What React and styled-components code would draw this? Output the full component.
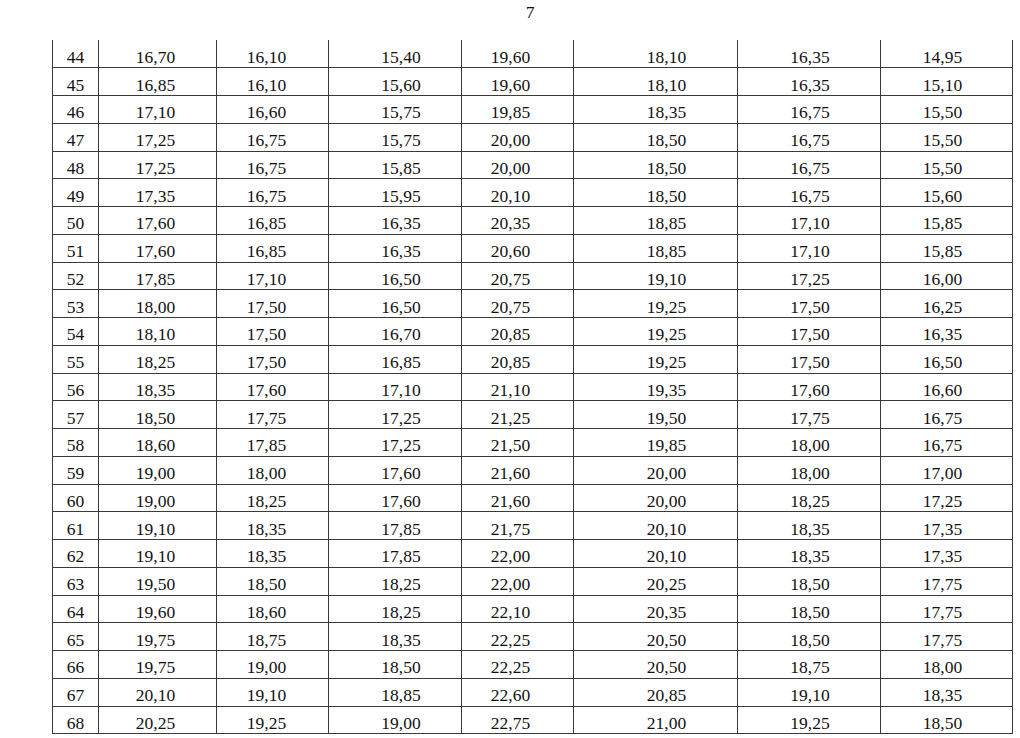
import React from "react";
import styled, { createGlobalStyle } from "styled-components";

const rows = [
	["44", "16,70", "16,10", "15,40", "19,60", "18,10", "16,35", "14,95"],
	["45", "16,85", "16,10", "15,60", "19,60", "18,10", "16,35", "15,10"],
	["46", "17,10", "16,60", "15,75", "19,85", "18,35", "16,75", "15,50"],
	["47", "17,25", "16,75", "15,75", "20,00", "18,50", "16,75", "15,50"],
	["48", "17,25", "16,75", "15,85", "20,00", "18,50", "16,75", "15,50"],
	["49", "17,35", "16,75", "15,95", "20,10", "18,50", "16,75", "15,60"],
	["50", "17,60", "16,85", "16,35", "20,35", "18,85", "17,10", "15,85"],
	["51", "17,60", "16,85", "16,35", "20,60", "18,85", "17,10", "15,85"],
	["52", "17,85", "17,10", "16,50", "20,75", "19,10", "17,25", "16,00"],
	["53", "18,00", "17,50", "16,50", "20,75", "19,25", "17,50", "16,25"],
	["54", "18,10", "17,50", "16,70", "20,85", "19,25", "17,50", "16,35"],
	["55", "18,25", "17,50", "16,85", "20,85", "19,25", "17,50", "16,50"],
	["56", "18,35", "17,60", "17,10", "21,10", "19,35", "17,60", "16,60"],
	["57", "18,50", "17,75", "17,25", "21,25", "19,50", "17,75", "16,75"],
	["58", "18,60", "17,85", "17,25", "21,50", "19,85", "18,00", "16,75"],
	["59", "19,00", "18,00", "17,60", "21,60", "20,00", "18,00", "17,00"],
	["60", "19,00", "18,25", "17,60", "21,60", "20,00", "18,25", "17,25"],
	["61", "19,10", "18,35", "17,85", "21,75", "20,10", "18,35", "17,35"],
	["62", "19,10", "18,35", "17,85", "22,00", "20,10", "18,35", "17,35"],
	["63", "19,50", "18,50", "18,25", "22,00", "20,25", "18,50", "17,75"],
	["64", "19,60", "18,60", "18,25", "22,10", "20,35", "18,50", "17,75"],
	["65", "19,75", "18,75", "18,35", "22,25", "20,50", "18,50", "17,75"],
	["66", "19,75", "19,00", "18,50", "22,25", "20,50", "18,75", "18,00"],
	["67", "20,10", "19,10", "18,85", "22,60", "20,85", "19,10", "18,35"],
	["68", "20,25", "19,25", "19,00", "22,75", "21,00", "19,25", "18,50"],
];

// column widths and how far the text sits off the column centre
const widths = [46, 118, 112, 133, 112, 164, 143, 132];
const shifts = [0, -2, -6, 6, -7, 11, 1, -4];

const App = () => {
	return (
		<>
			<GlobalStyle />
			<Page>
				<PageNumber>7</PageNumber>
				<Table>
					<colgroup>
						{widths.map((w, i) => (
							<col key={i} style={{ width: w }} />
						))}
					</colgroup>
					<tbody>
						{rows.map((row) => (
							<Row key={row[0]}>
								{row.map((cell, i) => (
									<Cell key={i} $shift={shifts[i]}>
										{cell}
									</Cell>
								))}
							</Row>
						))}
					</tbody>
				</Table>
			</Page>
		</>
	);
};

const GlobalStyle = createGlobalStyle`
	body {
		margin: 0;
		background: #fff;
		font-family: "Liberation Serif", "Times New Roman", serif;
		color: #111;
	}
`;

const Page = styled.div`
	width: 960px;
	padding-left: 52px;
`;

const PageNumber = styled.div`
	height: 40px;
	padding-right: 4px;
	box-sizing: border-box;
	text-align: center;
	font-size: 17.5px;
	line-height: 24px;
`;

const Table = styled.table`
	width: 961px;
	table-layout: fixed;
	border-collapse: collapse;
	font-size: 17.5px;
`;

const Row = styled.tr`
	height: 27.76px;
`;

const Cell = styled.td`
	padding: 6px ${(p) => Math.max(0, -2 * p.$shift)}px 0
		${(p) => Math.max(0, 2 * p.$shift)}px;
	text-align: center;
	line-height: 20px;
	border-left: 1px solid #3a3a3a;
	border-right: 1px solid #3a3a3a;
	border-bottom: 1px solid #3a3a3a;
`;

export default App;
